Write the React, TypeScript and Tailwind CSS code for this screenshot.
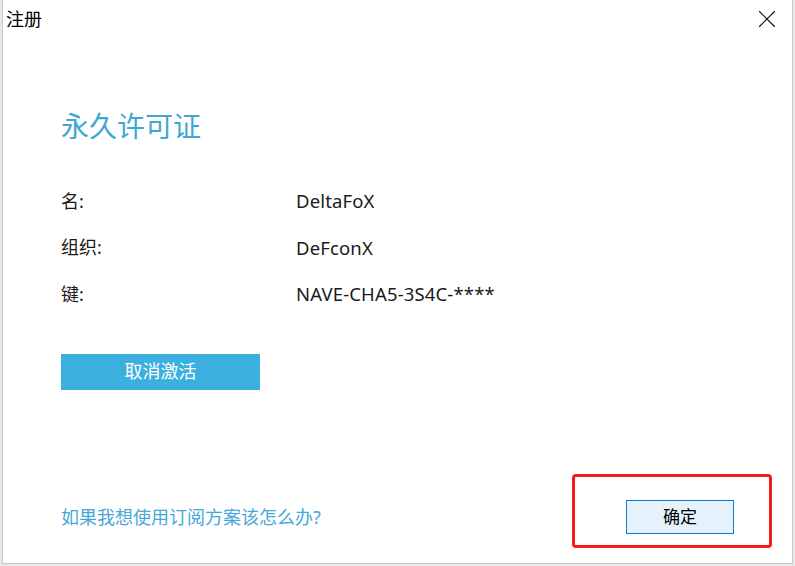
import { X } from 'lucide-react'

const font = { fontFamily: "'Noto Sans', 'Noto Sans CJK SC', sans-serif" }

// rows of the licence info
const rows = [
  { label: '名:', value: 'DeltaFoX' },
  { label: '组织:', value: 'DeFconX' },
  { label: '键:', value: 'NAVE-CHA5-3S4C-****' },
]

export default function App() {
  return (
    <div style={font} className="relative w-[795px] h-[566px] bg-[#e8e8e8] overflow-hidden">
      <div className="ml-[2px] w-[791px] h-[564px] bg-white border-l border-r border-b border-[#c8c8c8] flex flex-col">
        {/* title bar */}
        <div className="h-[38px] flex items-center justify-between pl-[3px] pr-[10px]">
          <span className="text-[18px] text-black leading-none">注册</span>
          <X size={30} strokeWidth={0.85} color="#111" />
        </div>

        <div className="pl-[58px] flex flex-col flex-1 pr-[58px] pb-[29px]">
          <h1 className="mt-[70px] text-[28px] leading-[36px] text-[#3ea7d6]">永久许可证</h1>

          <div className="mt-[34px] flex flex-col">
            {rows.map((r) => (
              <div key={r.label} className="h-[46.5px] flex items-center text-[18px] text-[#1a1a1a]">
                <span className="w-[235px]">{r.label}</span>
                <span className="text-[18.5px] tracking-[0.15px]">{r.value}</span>
              </div>
            ))}
          </div>

          <button className="mt-[36px] w-[199px] h-[36px] bg-[#3bb0de] text-white text-[18px] flex items-center justify-center">
            取消激活
          </button>

          <div className="mt-auto flex items-center justify-between">
            <a className="text-[18px] text-[#46a7d8]">如果我想使用订阅方案该怎么办?</a>
            <button className="w-[108px] h-[34px] bg-[#e5f1fb] border border-[#0a78d4] text-[17px] text-black flex items-center justify-center">
              确定
            </button>
          </div>
        </div>
      </div>

      {/* red annotation box */}
      <div className="absolute left-[572px] top-[474px] w-[200px] h-[74px] border-[3px] border-[#f21c1c] rounded-[4px]" />
    </div>
  )
}
